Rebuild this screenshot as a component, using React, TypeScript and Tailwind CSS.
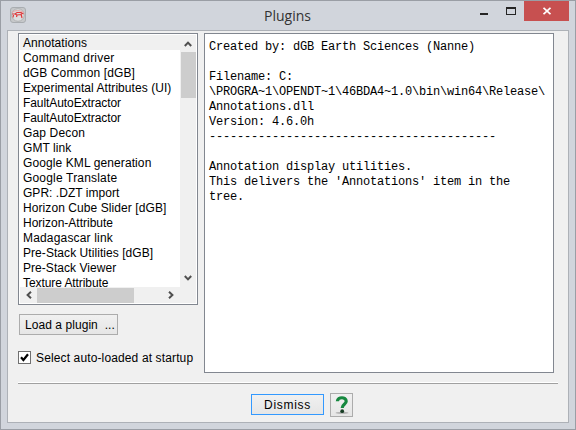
const plugins: { name: string; spacing: string }[] = [
  { name: "Annotations", spacing: "tracking-[0.05px]" },
  { name: "Command driver", spacing: "tracking-[0.2px]" },
  { name: "dGB Common [dGB]", spacing: "tracking-[0.12px]" },
  { name: "Experimental Attributes (UI)", spacing: "tracking-[0.06px]" },
  { name: "FaultAutoExtractor", spacing: "tracking-[-0.08px]" },
  { name: "FaultAutoExtractor", spacing: "tracking-[-0.08px]" },
  { name: "Gap Decon", spacing: "tracking-[0.15px]" },
  { name: "GMT link", spacing: "tracking-[0.05px]" },
  { name: "Google KML generation", spacing: "tracking-[0.1px]" },
  { name: "Google Translate", spacing: "tracking-[0.18px]" },
  { name: "GPR: .DZT import", spacing: "tracking-[0.04px]" },
  { name: "Horizon Cube Slider [dGB]", spacing: "tracking-[0.08px]" },
  { name: "Horizon-Attribute", spacing: "tracking-[0px]" },
  { name: "Madagascar link", spacing: "tracking-[0.17px]" },
  { name: "Pre-Stack Utilities [dGB]", spacing: "tracking-[0.06px]" },
  { name: "Pre-Stack Viewer", spacing: "tracking-[0.05px]" },
  { name: "Texture Attribute", spacing: "tracking-[-0.08px]" },
];

const details = `Created by: dGB Earth Sciences (Nanne)

Filename: C:
\\PROGRA~1\\OPENDT~1\\46BDA4~1.0\\bin\\win64\\Release\\
Annotations.dll
Version: 4.6.0h
-----------------------------------------

Annotation display utilities.
This delivers the 'Annotations' item in the
tree.`;

function Chevron({ className = "" }: { className?: string }) {
  return (
    <svg viewBox="0 0 8 8" className={`h-2 w-2 ${className}`} fill="none" stroke="#505050" strokeWidth="2">
      <path d="M0.8 6 L4 2.6 L7.2 6" />
    </svg>
  );
}

function TitleBar() {
  return (
    <div className="flex h-[29px] shrink-0 items-start">
      <svg viewBox="0 0 16 16" className="mt-[6px] ml-[9px] h-4 w-4 shrink-0">
        <rect x="0.5" y="0.5" width="15" height="15" rx="2.5" fill="#c6c8ca" stroke="#a9adb1" />
        <circle cx="8" cy="8" r="6.3" fill="#dcdedf" stroke="#b0b2b4" />
        <path d="M2 5.5 C5 3 10 3 14 5.5" fill="none" stroke="#e9a3a3" strokeWidth="1" />
        <path d="M2 7 L5 7 L7 5.5 L11 5.5 L13.5 7 M5 7 L7 8 L11 7.5 M3.5 8 L3 10.5 M7 8 L6.5 10 M11 6.5 L12 11" fill="none" stroke="#e0393b" strokeWidth="1.2" />
      </svg>
      <h1 className="mt-[4px] flex-1 pl-[238px] font-['Open_Sans','Noto_Sans',sans-serif] text-[14px] leading-[21px] font-normal text-[#333]">
        Plugins
      </h1>
      <div className="mt-[12px] mr-[18px] h-[2px] w-2 shrink-0 bg-[#252525]" />
      <div className="mt-[6px] mr-2 h-2 w-[10px] shrink-0 border border-t-2 border-[#252525]" />
      <div className="flex h-5 w-[45px] shrink-0 items-center justify-center bg-[#c75050]">
        <svg viewBox="0 0 8 8" className="h-2 w-2" stroke="#fff" strokeWidth="1.8">
          <path d="M0.5 0.8 L7.5 7.2 M7.5 0.8 L0.5 7.2" />
        </svg>
      </div>
      <div className="w-[6px] shrink-0" />
    </div>
  );
}

function PluginList() {
  return (
    <div className="h-[272px] w-[180px] border border-[#828790] bg-white p-px">
      <div className="flex h-[252px]">
        <ul className="w-[160px] overflow-hidden text-[12px] leading-[17px]">
          {plugins.map((p, i) => (
            <li key={i} className={`h-[15px] pl-[3px] whitespace-nowrap ${p.spacing} ${i === 0 ? "bg-[#f0f0f0]" : ""}`}>
              {p.name}
            </li>
          ))}
        </ul>
        <div className="flex w-4 flex-col items-center bg-[#f0f0f0]">
          <div className="flex h-[17px] items-center">
            <Chevron />
          </div>
          <div className="h-[46px] w-[15px] bg-[#cdcdcd]" />
          <div className="flex flex-1 items-end pb-[5px]">
            <Chevron className="rotate-180" />
          </div>
        </div>
      </div>
      <div className="flex h-4 w-full items-center bg-[#f0f0f0]">
        <div className="flex w-[17px] justify-center">
          <Chevron className="-rotate-90" />
        </div>
        <div className="h-[15px] w-[97px] bg-[#cdcdcd]" />
        <Chevron className="ml-[33px] rotate-90" />
      </div>
    </div>
  );
}

export default function App() {
  return (
    <div className="flex h-[430px] w-[576px] flex-col border border-[#9a9ea5] bg-[#d1d5dc] font-['Liberation_Sans',Arial,sans-serif] text-[12px] text-black">
      <TitleBar />
      <main className="mx-[6px] flex h-[393px] flex-col border border-[#adb1b7] bg-[#f0f0f0] pt-[2px] pl-[10px]">
        <div className="flex">
          <div className="flex w-[186px] flex-col">
            <PluginList />
            <button className="mt-[9px] ml-px h-[21px] w-[99px] border border-[#acacac] bg-linear-to-b from-[#f0f0f0] to-[#e6e6e6] pl-[5px] text-left leading-[21px] tracking-[0.06px] whitespace-pre">
              {"Load a plugin  ..."}
            </button>
            <label className="mt-4 flex h-[13px] items-center">
              <span className="flex h-[13px] w-[13px] items-center justify-center border border-[#707070] bg-white">
                <svg viewBox="0 0 9 9" className="h-[9px] w-[9px]" fill="none" stroke="#000" strokeWidth="2.2">
                  <path d="M1 4.3 L3.4 7 L8 1.3" />
                </svg>
              </span>
              <span className="ml-[5px] tracking-[0.13px] whitespace-nowrap">Select auto-loaded at startup</span>
            </label>
          </div>
          <pre className="h-[340px] w-[350px] border border-[#828790] bg-white pt-[6px] pl-1 font-['Liberation_Mono','Courier_New',monospace] text-[12px] leading-[15px] tracking-[-0.2px]">
            {details}
          </pre>
        </div>
        <div className="mt-[9px] h-[2px] w-[540px] border-t border-b border-t-white border-b-[#a0a0a0]" />
        <div className="mt-[9px] ml-[233px] flex items-start">
          <button className="mt-px h-[21px] w-[73px] border border-[#3399ff] bg-linear-to-b from-[#f0f0f0] to-[#e6e6e6] leading-[21px] tracking-[0.7px]">
            Dismiss
          </button>
          <button className="ml-[6px] flex h-6 w-[23px] items-center justify-center border border-[#acacac] bg-linear-to-b from-[#f0f0f0] to-[#e6e6e6]" aria-label="Help">
            <svg viewBox="0 0 16 18" className="h-[18px] w-4">
              <ellipse cx="8" cy="16.9" rx="6.5" ry="0.8" fill="#aaa" />
              <path d="M3.4 5.2 C3.6 0.6 12.2 0.6 12.2 5.2 C12.2 8.3 8.2 8.2 8.2 12" fill="none" stroke="#16883f" strokeWidth="3.2" />
              <circle cx="8.2" cy="15.2" r="1.9" fill="#173d24" />
            </svg>
          </button>
        </div>
      </main>
    </div>
  );
}
